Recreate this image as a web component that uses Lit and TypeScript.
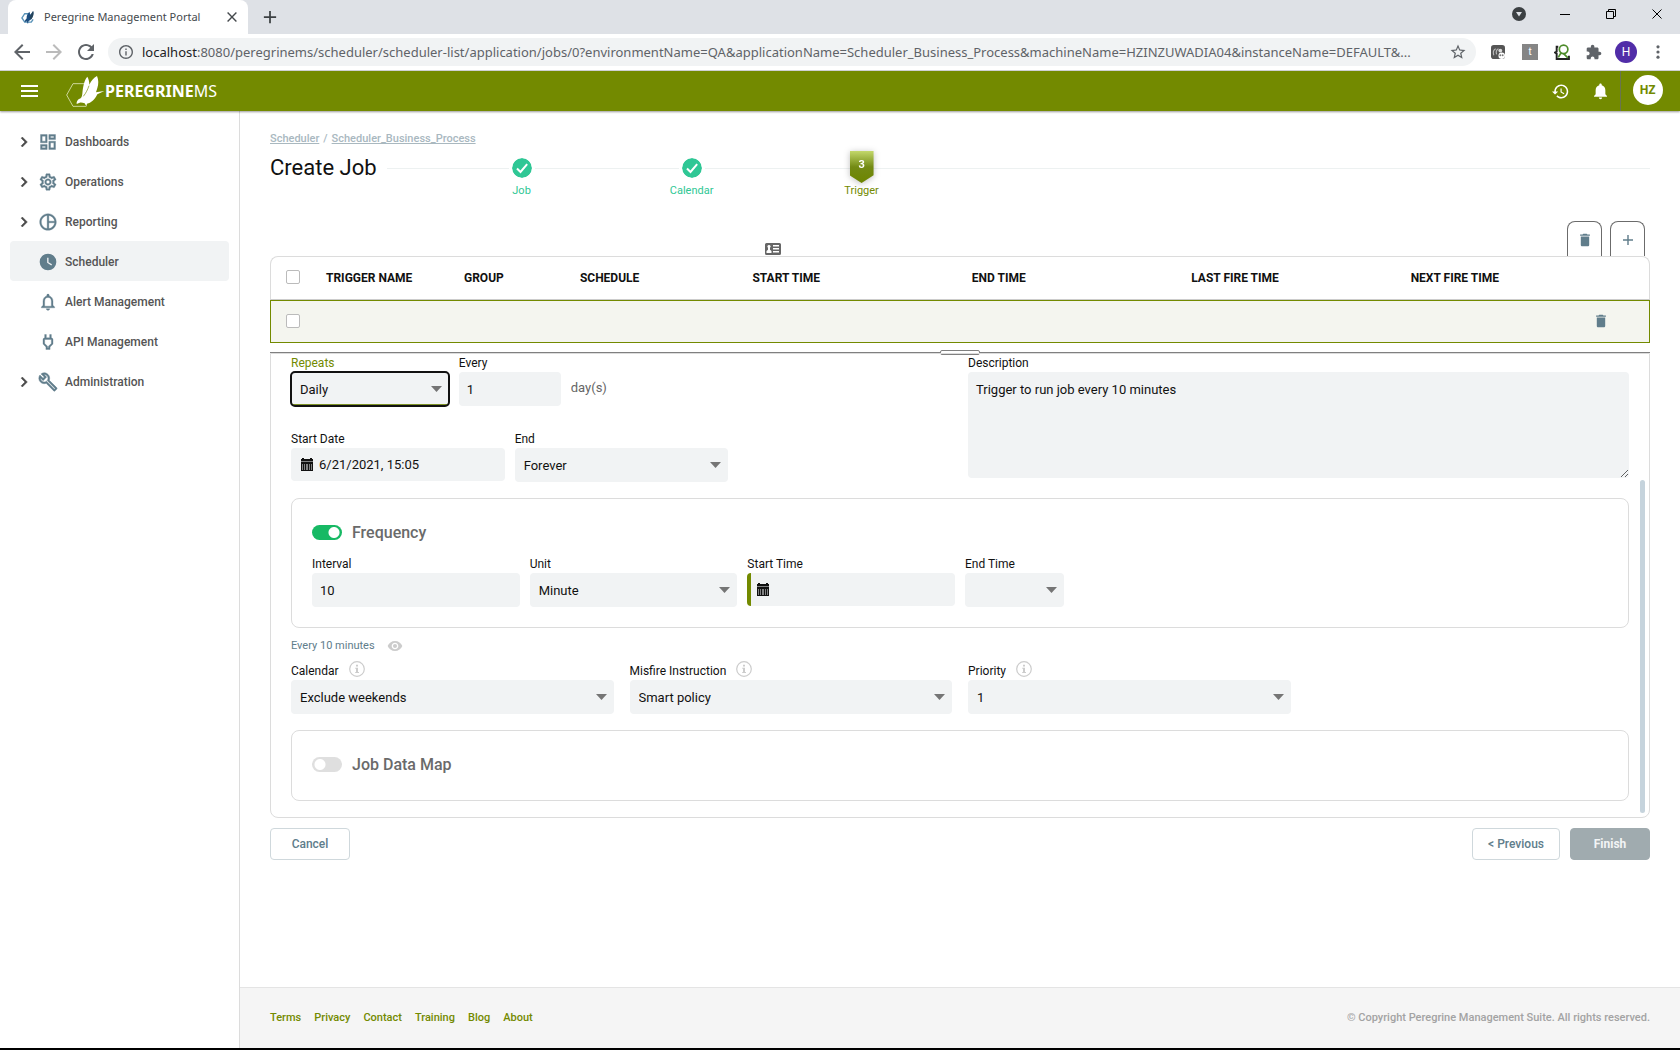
import { LitElement, html, css, svg, nothing, TemplateResult } from "lit";
import { customElement, state } from "lit/decorators.js";
import { classMap } from "lit/directives/class-map.js";

const icon = (box: string, body: TemplateResult, cls = "icon") =>
  html`<svg class=${cls} viewBox=${box} fill="currentColor" aria-hidden="true">${body}</svg>`;

const shapes = {
  dashboards: svg`<path d="M19 5v2h-4V5h4M9 5v6H5V5h4m10 8v6h-4v-6h4M9 17v2H5v-2h4M21 3h-8v6h8V3zM11 3H3v10h8V3zm10 8h-8v10h8V11zm-10 4H3v6h8v-6z" stroke="currentColor" stroke-width=".4"/>`,
  operations: svg`<path d="M19.43 12.98c.04-.32.07-.64.07-.98 0-.34-.03-.66-.07-.98l2.11-1.65c.19-.15.24-.42.12-.64l-2-3.46c-.09-.16-.26-.25-.44-.25-.06 0-.12.01-.17.03l-2.49 1c-.52-.4-1.08-.73-1.69-.98l-.38-2.65C14.46 2.18 14.25 2 14 2h-4c-.25 0-.46.18-.49.42l-.38 2.65c-.61.25-1.17.59-1.69.98l-2.49-1c-.06-.02-.12-.03-.18-.03-.17 0-.34.09-.43.25l-2 3.46c-.13.22-.07.49.12.64l2.11 1.65c-.04.32-.07.65-.07.98 0 .33.03.66.07.98l-2.11 1.65c-.19.15-.24.42-.12.64l2 3.46c.09.16.26.25.44.25.06 0 .12-.01.17-.03l2.49-1c.52.4 1.08.73 1.69.98l.38 2.65c.03.24.24.42.49.42h4c.25 0 .46-.18.49-.42l.38-2.65c.61-.25 1.17-.59 1.69-.98l2.49 1c.06.02.12.03.18.03.17 0 .34-.09.43-.25l2-3.46c.12-.22.07-.49-.12-.64l-2.11-1.65zm-1.98-1.71c.04.31.05.52.05.73 0 .21-.02.43-.05.73l-.14 1.13.89.7 1.08.84-.7 1.21-1.27-.51-1.04-.42-.9.68c-.43.32-.84.56-1.25.73l-1.06.43-.16 1.13-.2 1.35h-1.4l-.19-1.35-.16-1.13-1.06-.43c-.43-.18-.83-.41-1.23-.71l-.91-.7-1.06.43-1.27.51-.7-1.21 1.08-.84.89-.7-.14-1.13c-.03-.31-.05-.54-.05-.74s.02-.43.05-.73l.14-1.13-.89-.7-1.08-.84.7-1.21 1.27.51 1.04.42.9-.68c.43-.32.84-.56 1.25-.73l1.06-.43.16-1.13.2-1.35h1.39l.19 1.35.16 1.13 1.06.43c.43.18.83.41 1.23.71l.91.7 1.06-.43 1.27-.51.7 1.21-1.07.85-.89.7.14 1.13zM12 8c-2.21 0-4 1.79-4 4s1.79 4 4 4 4-1.79 4-4-1.79-4-4-4zm0 6c-1.1 0-2-.9-2-2s.9-2 2-2 2 .9 2 2-.9 2-2 2z" stroke="currentColor" stroke-width=".4"/>`,
  reporting: svg`<path d="M12 2C6.48 2 2 6.48 2 12s4.48 10 10 10 10-4.48 10-10S17.52 2 12 2zm1 2.07c3.61.45 6.48 3.33 6.93 6.93H13V4.07zM4 12c0-4.06 3.07-7.44 7-7.93v15.87c-3.93-.5-7-3.88-7-7.94zm9 7.93V13h6.93c-.45 3.61-3.32 6.48-6.93 6.93z" stroke="currentColor" stroke-width=".4"/>`,
  scheduler: svg`<path fill-rule="evenodd" d="M12 2a10 10 0 1 0 0 20 10 10 0 0 0 0-20zm-1 5h1.6v5.2l4.2 2.6-.8 1.3-5-3.1V7z"/>`,
  bellOutline: svg`<path d="M12 22c1.1 0 2-.9 2-2h-4c0 1.1.9 2 2 2zm6-6v-5c0-3.07-1.63-5.64-4.5-6.32V4c0-.83-.67-1.5-1.5-1.5s-1.5.67-1.5 1.5v.68C7.64 5.36 6 7.92 6 11v5l-2 2v1h16v-1l-2-2zm-2 1H8v-6c0-2.48 1.51-4.5 4-4.5s4 2.02 4 4.5v6z" stroke="currentColor" stroke-width=".4"/>`,
  plug: svg`<path d="M16.01 7V3h-2v4h-4V3H8v4h-.01C7 6.99 6 7.99 6 8.99v5.49L9.5 18v3h5v-3l3.5-3.51v-5.5c0-1-1-2-1.99-1.99zM16 13.66l-3.5 3.51V19h-1v-1.83L8 13.65V9h8v4.66z" stroke="currentColor" stroke-width=".4"/>`,
  wrench: svg`<path d="M22.61 18.99l-9.08-9.08c.93-2.34.45-5.1-1.44-7C9.79.61 6.21.4 3.66 2.26L7.5 6.11 6.08 7.52 2.25 3.69C.39 6.23.6 9.82 2.9 12.11c1.86 1.86 4.57 2.35 6.89 1.48l9.11 9.11c.39.39 1.02.39 1.41 0l2.3-2.3c.4-.38.4-1.01 0-1.41zm-3 1.6l-9.46-9.46c-.61.45-1.29.72-2 .82-1.36.2-2.79-.21-3.83-1.25C3.37 9.76 2.93 8.5 3 7.26l3.09 3.09 4.24-4.24-3.09-3.09c1.24-.07 2.49.37 3.44 1.31 1.08 1.08 1.49 2.57 1.24 3.96-.12.71-.42 1.37-.88 1.96l9.45 9.45-.88.89z" stroke="currentColor" stroke-width=".6"/>`,
  chevron: svg`<path d="M8.59 16.59L13.17 12 8.59 7.41 10 6l6 6-6 6z" stroke="currentColor" stroke-width=".6"/>`,
  history: svg`<path d="M13 3c-4.97 0-9 4.03-9 9H1l3.89 3.89.07.14L9 12H6c0-3.87 3.13-7 7-7s7 3.13 7 7-3.13 7-7 7c-1.93 0-3.68-.79-4.94-2.06l-1.42 1.42C8.27 19.99 10.51 21 13 21c4.97 0 9-4.03 9-9s-4.03-9-9-9zm-1 5v5l4.28 2.54.72-1.21-3.5-2.08V8H12z"/>`,
  bell: svg`<path d="M12 22c1.1 0 2-.9 2-2h-4c0 1.1.89 2 2 2zm6-6v-5c0-3.07-1.64-5.64-4.5-6.32V4c0-.83-.67-1.5-1.5-1.5s-1.5.67-1.5 1.5v.68C7.63 5.36 6 7.92 6 11v5l-2 2v1h16v-1l-2-2z"/>`,
  trash: svg`<path d="M6 19c0 1.1.9 2 2 2h8c1.1 0 2-.9 2-2V7H6v12zM19 4h-3.5l-1-1h-5l-1 1H5v2h14V4z"/>`,
  plus: svg`<path d="M19 13h-6v6h-2v-6H5v-2h6V5h2v6h6v2z"/>`,
  check: svg`<circle cx="12" cy="12" r="12"/><path d="M6 12.6l4.2 4.2L18.2 7.4" fill="none" stroke="#fff" stroke-width="2.4"/>`,
  eye: svg`<path fill-rule="evenodd" d="M12 4.500C7 4.500 2.730 7.610 1 12c1.730 4.390 6 7.500 11 7.500s9.270-3.110 11-7.500c-1.730-4.390-6-7.500-11-7.500zM12 17c-2.760 0-5-2.240-5-5s2.240-5 5-5 5 2.240 5 5-2.240 5-5 5zm0-8c-1.660 0-3 1.340-3 3s1.340 3 3 3 3-1.340 3-3-1.340-3-3-3z"/>`,
  info: svg`<circle cx="8" cy="8" r="7.300" fill="none" stroke="currentColor" stroke-width="1.200"/><path d="M7 3.800h2v1.700H7zM6.200 6.800H9v4.300h1V12H6.200v-.9H7V7.700h-.8z"/>`,
  calendar: svg`<path d="M0 1h1V0h2v1h6V0h2v1h1v2.500H0z"/><path fill-rule="evenodd" d="M0 4h12v9H0zM1 6.500v1h1v-1zm2 0v1h1v-1zm2 0v1h2v-1zm3 0v1h1v-1zm2 0v1h1v-1zM1 8.500v1h1v-1zm2 0v1h1v-1zm2 0v1h2v-1zm3 0v1h1v-1zm2 0v1h1v-1zM1 10.500v1h1v-1zm2 0v1h1v-1zm2 0v1h2v-1zm3 0v1h1v-1zm2 0v1h1v-1z"/>`,
  contact: svg`<path fill-rule="evenodd" d="M1.500 0h13A1.500 1.500 0 0 1 16 1.500v9a1.500 1.500 0 0 1-1.500 1.500h-13A1.500 1.500 0 0 1 0 10.500v-9A1.500 1.500 0 0 1 1.500 0zM4 2a1.500 1.500 0 0 0-1 2.700v2L1.500 8v2h5V8L5 6.700v-2A1.500 1.500 0 0 0 4 2zm4 0v1.500h6V2zm0 3v1.500h6V5zm0 3v1.500h6V8z"/>`,
  back: svg`<path d="M20 11H7.830l5.590-5.590L12 4l-8 8 8 8 1.410-1.410L7.830 13H20v-2z"/>`,
  forward: svg`<path d="M12 4l-1.410 1.410L16.170 11H4v2h12.170l-5.580 5.590L12 20l8-8z"/>`,
  reload: svg`<path d="M17.650 6.350C16.200 4.900 14.210 4 12 4c-4.420 0-7.990 3.580-7.990 8s3.570 8 7.990 8c3.730 0 6.840-2.550 7.730-6h-2.080c-.82 2.330-3.040 4-5.650 4-3.310 0-6-2.690-6-6s2.690-6 6-6c1.660 0 3.140.69 4.220 1.780L13 11h7V4l-2.350 2.350z"/>`,
  siteInfo: svg`<path d="M11 7h2v2h-2zm0 4h2v6h-2zm1-9C6.480 2 2 6.480 2 12s4.480 10 10 10 10-4.480 10-10S17.520 2 12 2zm0 18c-4.410 0-8-3.590-8-8s3.590-8 8-8 8 3.590 8 8-3.590 8-8 8z"/>`,
  star: svg`<path d="M22 9.240l-7.190-.62L12 2 9.190 8.630 2 9.240l5.460 4.730L5.820 21 12 17.270 18.180 21l-1.630-7.030L22 9.240zM12 15.400l-3.760 2.270 1-4.280-3.320-2.880 4.380-.38L12 6.100l1.710 4.040 4.380.38-3.320 2.880 1 4.280L12 15.400z"/>`,
  puzzle: svg`<path d="M20.500 11H19V7c0-1.100-.9-2-2-2h-4V3.500C13 2.120 11.880 1 10.500 1S8 2.120 8 3.500V5H4c-1.100 0-1.990.9-1.990 2v3.800H3.500c1.490 0 2.700 1.210 2.700 2.700s-1.210 2.700-2.700 2.700H2V20c0 1.100.9 2 2 2h3.800v-1.500c0-1.490 1.210-2.700 2.700-2.700s2.700 1.210 2.700 2.700V22H17c1.100 0 2-.9 2-2v-4h1.500c1.380 0 2.500-1.120 2.500-2.500S21.880 11 20.500 11z"/>`,
  dots: svg`<circle cx="12" cy="5.500" r="2"/><circle cx="12" cy="12" r="2"/><circle cx="12" cy="18.500" r="2"/>`,
  close: svg`<path d="M19 6.410L17.590 5 12 10.590 6.410 5 5 6.410 10.590 12 5 17.590 6.410 19 12 13.410 17.590 19 19 17.590 13.410 12z"/>`,
  menu: svg`<path d="M0 0h17v2H0zM0 5h17v2H0zM0 10h17v2H0z"/>`,
  circleDown: svg`<circle cx="7" cy="7" r="7"/><path d="M4 5h6l-3 4.500z" fill="#dee1e6"/>`,
  minimize: svg`<path d="M0 5h10v1H0z"/>`,
  restore: svg`<path d="M.5 2.500h7v7h-7zM2.500 2.500v-2h7v7h-2" fill="none" stroke="currentColor"/>`,
  windowClose: svg`<path d="M.5.5l9 9M9.500.5l-9 9" fill="none" stroke="currentColor"/>`,
  extFox: svg`<rect width="15" height="15" rx="3" fill="#555"/><path d="M3 11C2 8 3 5 5 4M6 10c-1-3 0-5 2-6" fill="none" stroke="#bbb" stroke-width="1.200"/><circle cx="10" cy="6" r="2" fill="#ddd"/><circle cx="11.500" cy="11.500" r="3.500" fill="#fff"/><circle cx="10" cy="11" r="1" fill="#777"/><circle cx="12.500" cy="11" r="1" fill="#777"/>`,
  extSearch: svg`<path d="M4 2.500H2.500V7L1 8l1.500 1v5H14v-3" fill="none" stroke="#222" stroke-width="1.800"/><circle cx="9" cy="5" r="4" fill="#fff" stroke="#4d8b2a" stroke-width="1.600"/><path d="M6.500 8.500L4 12.500M9 9l4 4" fill="none" stroke="#4d8b2a" stroke-width="1.600"/>`,
  bird: svg`<path d="M258 246H218L199 280l19 34h40" fill="none" stroke="#dfe6b8" stroke-width="2.500"/><path d="M246 276c2-20 5-40 15-51 4 7 6 15 6 24 6-12 13-21 23-26 5 12 5 24 1 36l-4 13 25-4-21 10c-8 17-19 26-31 28l-2 8-5-9c-6-2-11-4-15-2l-9 4c-1-7 3-12 7-15 6-2 9-6 10-16z" fill="#fff"/><path d="M266 252c-4 12-9 22-17 32" fill="none" stroke="#738a00" stroke-width="2"/>`,
  favicon: svg`<path d="M8 4H4L1 8.500 4 13h7l2-3" fill="none" stroke="#5a93b8" stroke-width="1.500"/><path d="M6 9c0-3 1-5 3-7l1 3 3-4c1 3 0 6-2 9l-3 2-.5 3-1.500-3-2 1c0-2 1-3 2-4z" fill="#1d4e80"/><path d="M9 8l4-7c1 3 0 6-2 9z" fill="#27455a"/>`,
};

interface NavItem {
  label: string;
  shape: TemplateResult;
  expandable: boolean;
}

const navItems: NavItem[] = [
  { label: "Dashboards", shape: shapes.dashboards, expandable: true },
  { label: "Operations", shape: shapes.operations, expandable: true },
  { label: "Reporting", shape: shapes.reporting, expandable: true },
  { label: "Scheduler", shape: shapes.scheduler, expandable: false },
  { label: "Alert Management", shape: shapes.bellOutline, expandable: false },
  { label: "API Management", shape: shapes.plug, expandable: false },
  { label: "Administration", shape: shapes.wrench, expandable: true },
];

const columns = ["Trigger Name", "Group", "Schedule", "Start Time", "End Time", "Last Fire Time", "Next Fire Time"];
const footerLinks = ["Terms", "Privacy", "Contact", "Training", "Blog", "About"];
const urlRest =
  ":8080/peregrinems/scheduler/scheduler-list/application/jobs/0?environmentName=QA&applicationName=Scheduler_Business_Process&machineName=HZINZUWADIA04&instanceName=DEFAULT&...";

@customElement("app-root")
export class AppRoot extends LitElement {
  @state() private activeNav = "Scheduler";
  @state() private frequency = true;
  @state() private dataMap = false;

  static styles = css`
    :host {
      display: flex;
      flex-direction: column;
      min-height: 100vh;
      box-sizing: border-box;
      border-bottom: 2px solid #000;
      background: #fff;
      color: #111;
      font: 400 13px/18px Roboto, "Liberation Sans", sans-serif;
    }
    *, *::before { box-sizing: border-box; }
    button, input, select, textarea { font: inherit; color: inherit; margin: 0; border-radius: 0; }
    button { border: 0; padding: 0; background: none; display: inline-flex; align-items: center; justify-content: center; cursor: pointer; }
    a { color: inherit; text-decoration: none; }
    svg { display: block; flex: none; }
    .icon { width: 20px; height: 20px; }

    .tabs { display: flex; height: 34px; background: #dee1e6; padding-left: 8px; font: 400 11px/18px "Noto Sans", "Open Sans", sans-serif; }
    .tab { display: flex; align-items: center; width: 240px; padding: 0 9px 0 13px; background: #fff; border-radius: 8px 8px 0 0; gap: 9px; color: #45494d; }
    .tab-title { flex: 1; white-space: nowrap; }
    .glyph16 { width: 16px; height: 16px; }
    .glyph14 { width: 14px; height: 14px; }
    .glyph10 { width: 10px; height: 10px; }
    .new-tab { width: 44px; color: #3c4043; }
    .window { margin-left: auto; display: flex; align-items: center; padding-bottom: 6px; color: #000; }
    .window button { width: 46px; }
    .window .glyph14 { color: #3c4043; }

    .toolbar { display: flex; align-items: center; height: 37px; padding: 0 6px 0 12px; gap: 6px; border-bottom: 1px solid #d4d6d9; color: #5f6368; }
    .nav-buttons { display: flex; gap: 12px; margin-right: 6px; }
    .nav-buttons .dim { color: #bbb; }
    .address { flex: 1; min-width: 0; display: flex; align-items: center; height: 28px; border-radius: 14px; background: #f1f3f4; padding: 0 9px 0 11px; gap: 9px; font: 400 13px/20px "Noto Sans", "Open Sans", sans-serif; }
    .glyph18 { width: 18px; height: 18px; }
    .url { flex: 1; min-width: 0; overflow: hidden; white-space: nowrap; }
    .host { color: #202124; }
    .extensions { display: flex; align-items: center; }
    .extensions button { width: 32px; }
    .ext-t { width: 16px; height: 16px; background: #858585; color: #fff; font: 400 11px/14px "Liberation Sans", sans-serif; text-align: center; }
    .profile { width: 22px; height: 22px; border-radius: 50%; background: #512da8; color: #fff; font-size: 12px; line-height: 22px; }

    .header { display: flex; align-items: center; height: 40px; background: #738a00; color: #fff; padding: 0 12px 0 21px; box-shadow: 0 1px 2px rgba(0, 0, 0, 0.4); position: relative; }
    .burger { width: 17px; height: 12px; }
    .brand { display: flex; align-items: center; margin-left: 28px; font: 400 16px/20px "Noto Sans", "Open Sans", sans-serif; }
    .brand strong { font-weight: 700; }
    .bird { width: 39px; height: 32px; }
    .header-actions { margin-left: auto; display: flex; align-items: stretch; height: 40px; }
    .header-actions button { width: 40px; }
    .header-actions .avatar-cell { width: 48px; border-left: 1px solid #6a7450; padding-left: 6px; }
    .avatar { display: grid; place-items: center; width: 30px; height: 30px; margin-bottom: 2px; border-radius: 50%; background: #fff; color: #738a00; font: 700 12px/18px "Open Sans", sans-serif; }
    .glyph17 { width: 17px; height: 17px; }

    .body { flex: 1; display: flex; }
    .sidebar { width: 240px; flex: none; border-right: 1px solid #dcdcdc; padding: 10px; }
    .nav-item { display: flex; align-items: center; height: 40px; padding: 1px 0 0 4px; border-radius: 4px; color: #555; font-size: 12px; font-weight: 500; }
    .nav-item.active { background: #f1f3f4; }
    .nav-item .icon { color: #607d8b; margin: 0 7px 0 4px; }
    .chevron-slot { width: 20px; }
    .nav-item .chevron { width: 20px; height: 20px; color: #4a4a4a; }

    .page { flex: 1; min-width: 0; display: flex; flex-direction: column; }
    .content { padding: 19px 30px; }
    .crumbs { display: flex; gap: 4px; font-size: 11px; font-weight: 500; line-height: 18px; color: #a9b8bf; }
    .crumbs a { text-decoration: underline; }
    .heading { display: flex; align-items: flex-start; gap: 10px; margin-top: 2px; }
    h1 { margin: 0; font-size: 22px; font-weight: 400; line-height: 36px; }
    .steps { flex: 1; display: flex; list-style: none; margin: 0; padding: 1px 0 0 50px; height: 48px; background: linear-gradient(#edf1f1, #edf1f1) 0 18px / 100% 1px no-repeat; }
    .step { width: 170px; display: flex; flex-direction: column; align-items: center; font-size: 11px; line-height: 14px; color: #2fc795; }
    .mark { display: grid; place-items: center; height: 36px; }
    .mark svg { width: 20px; height: 20px; border-radius: 50%; box-shadow: 0 0 0 3px #fff; }
    .step.current { color: #738a00; }
    .badge { display: block; width: 24px; height: 32px; margin-bottom: 1px; text-align: center; color: #fff; font-weight: 700; line-height: 27px; background: linear-gradient(#c3d86b, #738a14 50%, #6d8500); clip-path: polygon(0 0, 100% 0, 100% 76%, 50% 100%, 0 76%); }
    .badge-shadow { filter: drop-shadow(0 1px 3px rgba(0, 0, 0, 0.25)); }

    .table-tools { display: flex; align-items: flex-end; gap: 8px; margin-top: 23px; padding-right: 5px; height: 35px; }
    .table-tools button { width: 35px; height: 35px; padding-top: 2px; border: 1px solid #6b6b6b; border-bottom: 0; border-radius: 8px 8px 0 0; color: #607d8b; }
    .table-tools .contact { width: 16px; height: 12px; margin: 0 auto 1px 36%; color: #666; }
    .triggers { width: 100%; table-layout: fixed; border-collapse: separate; border-spacing: 0; }
    .triggers th { height: 44px; padding: 0; text-align: left; text-transform: uppercase; font-size: 12px; font-weight: 700; border-top: 1px solid #dcdcdc; border-bottom: 1px solid #ccc; }
    .triggers th:first-child { border-left: 1px solid #dcdcdc; border-top-left-radius: 8px; }
    .triggers th:last-child { border-right: 1px solid #dcdcdc; border-top-right-radius: 8px; }
    .triggers td { height: 43px; padding: 0; background: #f4f5ef; border-top: 1px solid #738a00; border-bottom: 1px solid #738a00; }
    .triggers td:first-child { border-left: 1px solid #738a00; }
    .triggers td:last-child { border-right: 1px solid #738a00; }
    .c-check { width: 56px; }
    .c-name { width: 10%; }
    .c-group { width: 8.4%; }
    .c-schedule { width: 12.5%; }
    .c-time { width: 15.9%; }
    .c-action { width: 60px; }
    .tick { appearance: none; display: block; width: 14px; height: 14px; margin: 0 0 2px 15px; border: 1px solid #bbb; border-radius: 2px; background: #fff; }
    .triggers td button { display: flex; margin: 0 0 2px 4px; color: #607d8b; }

    .splitter { position: relative; margin-top: 9px; border-top: 1px solid #808080; }
    .splitter::before { content: ""; position: absolute; top: -3px; left: 50%; width: 40px; height: 5px; margin-left: -20px; border: 1px solid #808080; border-radius: 2px; background: #fff; }
    .panel { position: relative; border: 1px solid #dcdcdc; border-radius: 0 0 8px 8px; padding: 0 20px 16px; }
    .thumb { position: absolute; right: 4px; bottom: 4px; width: 5px; height: 72%; border-radius: 3px; background: #c5d3dc; }

    .halves { display: grid; grid-template-columns: 1fr 1fr; gap: 16px; }
    .stack { display: flex; flex-direction: column; gap: 24px; }
    .row4, .row3, .row6 { display: grid; gap: 10px; }
    .row4 { grid-template-columns: repeat(4, 1fr); }
    .row3 { grid-template-columns: repeat(3, 1fr); }
    .row6 { grid-template-columns: repeat(6, 1fr); }
    .quarters { display: grid; grid-template-columns: repeat(4, 1fr); gap: 16px; }
    .field { min-width: 0; }
    .field > .label { display: flex; align-items: center; height: 18px; gap: 10px; font-size: 12px; }
    .field.on > .label { color: #738a00; }
    .with-unit { display: flex; gap: 10px; grid-column: span 2; }
    .with-unit .field { width: 102px; }
    .unit { align-self: flex-end; line-height: 18px; margin-bottom: 9px; color: #666; }
    .label .info { width: 16px; height: 16px; color: #ccc; margin-bottom: 4px; }
    .box, .select, .date { display: block; width: 100%; height: 34px; border: 0; border-radius: 4px; background: #f1f3f4; padding: 0 8px; outline: 0; }
    .select { appearance: none; grid-area: 1 / 1; padding: 2px 9px 0; }
    .select-wrap { display: grid; align-items: center; }
    .arrow { grid-area: 1 / 1; justify-self: end; width: 11px; height: 6px; margin-right: 7px; color: #757575; pointer-events: none; }
    .on .select { border-bottom: 2px solid #7d9126; padding-top: 4px; outline: 2px solid #111; outline-offset: -1px; }
    .date { display: flex; align-items: center; height: 33px; gap: 6px; padding-left: 10px; }
    .date.required { border-left: 4px solid #738a00; padding-left: 6px; }
    .date input { flex: 1; min-width: 0; border: 0; padding: 0; background: none; outline: 0; }
    .cal { width: 12px; height: 13px; color: #111; }
    .half-width { width: 99px; }
    textarea.box { height: 106px; padding: 9px 8px; resize: vertical; }

    .card { border: 1px solid #dcdcdc; border-radius: 8px; padding: 20px; margin-top: 16px; min-height: 71px; }
    .card-title { display: flex; align-items: center; gap: 10px; height: 28px; font-size: 16px; font-weight: 500; color: #6a6a6a; }
    .switch { appearance: none; width: 30px; height: 15px; margin-bottom: 1px; border-radius: 8px; background: radial-gradient(circle at 8px 50%, #fff 5px, transparent 6px) #dfdfdf; }
    .switch:checked { background: radial-gradient(circle at 22px 50%, #fff 5px, transparent 6px) #17b964; }
    .card .row6 { margin-top: 8px; }
    .summary { display: flex; align-items: center; gap: 12px; margin: 9px 0 7px; height: 18px; font-size: 11px; color: #607d8b; }
    .summary svg { width: 16px; height: 16px; color: #ccc; }

    .actions { display: flex; gap: 10px; margin-top: 10px; }
    .actions button { height: 32px; min-width: 80px; padding: 0 15px; border: 1px solid #cfd8dc; border-radius: 4px; background: #fff; color: #607d8b; font-size: 12px; font-weight: 500; }
    .actions .cancel { margin-right: auto; }
    .actions .finish { background: #a0abaf; border-color: #a0abaf; color: #f2f4f5; font-weight: 700; }

    .footer { margin-top: auto; display: flex; justify-content: space-between; align-items: center; height: 61px; padding: 0 30px; background: #f5f5f5; border-top: 1px solid #e4e4e4; font-size: 11px; font-weight: 500; color: #a3a3a3; }
    .footer nav { display: flex; gap: 13px; color: #738a00; }
  `;

  private field(id: string, label: string, control: TemplateResult, info = false, on = false) {
    return html`<div class=${classMap({ field: true, on })}>
      <div class="label"><label for=${id}>${label}</label>${info ? icon("0 0 16 16", shapes.info, "info") : nothing}</div>
      ${control}
    </div>`;
  }

  private select(id: string, value: string) {
    return html`<div class="select-wrap">
      <select class="select" id=${id}><option>${value}</option></select>
      <svg class="arrow" viewBox="0 0 11 6" fill="currentColor" aria-hidden="true"><path d="M0 0h11L5.500 6z"/></svg>
    </div>`;
  }

  private date(id: string, value: string, required = false) {
    return html`<div class=${classMap({ date: true, required })}>
      ${icon("0 0 12 13", shapes.calendar, "cal")}<input id=${id} type="text" .value=${value} />
    </div>`;
  }

  private browserBar() {
    return html`
      <div class="tabs">
        <div class="tab">
          ${icon("0 0 15 15", shapes.favicon, "glyph14")}
          <span class="tab-title">Peregrine Management Portal</span>
          <button aria-label="Close tab">${icon("2 2 20 20", shapes.close, "glyph14")}</button>
        </div>
        <button class="new-tab" aria-label="New tab">${icon("4 4 16 16", shapes.plus, "glyph14")}</button>
        <div class="window">
          <button aria-label="Search tabs">${icon("0 0 14 14", shapes.circleDown, "glyph14")}</button>
          <button aria-label="Minimize">${icon("0 0 10 10", shapes.minimize, "glyph10")}</button>
          <button aria-label="Restore">${icon("0 0 10 10", shapes.restore, "glyph10")}</button>
          <button aria-label="Close window">${icon("0 0 10 10", shapes.windowClose, "glyph10")}</button>
        </div>
      </div>
      <div class="toolbar">
        <div class="nav-buttons">
          <button aria-label="Back">${icon("2 2 20 20", shapes.back)}</button>
          <button class="dim" aria-label="Forward">${icon("2 2 20 20", shapes.forward)}</button>
          <button aria-label="Reload">${icon("2 2 20 20", shapes.reload)}</button>
        </div>
        <div class="address">
          ${icon("2 2 20 20", shapes.siteInfo, "glyph14")}
          <div class="url"><span class="host">localhost</span>${urlRest}</div>
          <button aria-label="Bookmark">${icon("0 0 24 24", shapes.star, "glyph18")}</button>
        </div>
        <div class="extensions">
          <button aria-label="Extension">${icon("0 0 15 15", shapes.extFox, "glyph14")}</button>
          <button><span class="ext-t">t</span></button>
          <button aria-label="Search extension">${icon("0 0 15 15", shapes.extSearch, "glyph16")}</button>
          <button aria-label="Extensions">${icon("1 0 23 23", shapes.puzzle, "glyph16")}</button>
          <button><span class="profile">H</span></button>
          <button aria-label="More">${icon("2 2 20 20", shapes.dots, "glyph16")}</button>
        </div>
      </div>
    `;
  }

  private form() {
    return html`
      <div class="splitter"></div>
      <form class="panel" @submit=${(e: Event) => e.preventDefault()}>
        <div class="halves">
          <div class="stack">
            <div class="row4">
              ${this.field("repeats", "Repeats", this.select("repeats", "Daily"), false, true)}
              <div class="with-unit">
                ${this.field("every", "Every", html`<input class="box" id="every" .value=${"1"} />`)}
                <span class="unit">day(s)</span>
              </div>
            </div>
            <div class="row3">
              ${this.field("start-date", "Start Date", this.date("start-date", "6/21/2021, 15:05"))}
              ${this.field("end", "End", this.select("end", "Forever"))}
            </div>
          </div>
          ${this.field("description", "Description", html`<textarea class="box" id="description" .value=${"Trigger to run job every 10 minutes"}></textarea>`)}
        </div>
        <section class="card">
          <div class="card-title">
            <input class="switch" id="frequency" type="checkbox" role="switch" .checked=${this.frequency}
              @change=${(e: Event) => (this.frequency = (e.target as HTMLInputElement).checked)} />
            <label for="frequency">Frequency</label>
          </div>
          ${this.frequency
            ? html`<div class="row6">
                ${this.field("interval", "Interval", html`<input class="box" id="interval" .value=${"10"} />`)}
                ${this.field("unit", "Unit", this.select("unit", "Minute"))}
                ${this.field("start-time", "Start Time", this.date("start-time", "", true))}
                <div class="half-width">${this.field("end-time", "End Time", this.select("end-time", ""))}</div>
              </div>`
            : nothing}
        </section>
        <div class="summary"><span>Every 10 minutes</span>${icon("0 0 24 24", shapes.eye)}</div>
        <div class="quarters">
          ${this.field("calendar", "Calendar", this.select("calendar", "Exclude weekends"), true)}
          ${this.field("misfire", "Misfire Instruction", this.select("misfire", "Smart policy"), true)}
          ${this.field("priority", "Priority", this.select("priority", "1"), true)}
        </div>
        <section class="card">
          <div class="card-title">
            <input class="switch" id="data-map" type="checkbox" role="switch" .checked=${this.dataMap}
              @change=${(e: Event) => (this.dataMap = (e.target as HTMLInputElement).checked)} />
            <label for="data-map">Job Data Map</label>
          </div>
        </section>
        <div class="thumb"></div>
      </form>
    `;
  }

  render() {
    return html`
      ${this.browserBar()}
      <header class="header">
        <button aria-label="Menu">${icon("0 0 17 12", shapes.menu, "burger")}</button>
        <a class="brand" href="#">${icon("197 220 117 96", shapes.bird, "bird")}<span><strong>PEREGRINE</strong>MS</span></a>
        <div class="header-actions">
          <button aria-label="History">${icon("1 2 22 20", shapes.history, "glyph17")}</button>
          <button aria-label="Notifications">${icon("2 2 20 21", shapes.bell, "glyph17")}</button>
          <button class="avatar-cell"><span class="avatar">HZ</span></button>
        </div>
      </header>
      <div class="body">
        <nav class="sidebar">
          ${navItems.map(
            (n) => html`<a class=${classMap({ "nav-item": true, active: n.label === this.activeNav })} href="#"
              @click=${() => (this.activeNav = n.label)}>
              <span class="chevron-slot">${n.expandable ? icon("0 0 24 24", shapes.chevron, "chevron") : nothing}</span>
              ${icon("0 0 24 24", n.shape)}<span>${n.label}</span>
            </a>`
          )}
        </nav>
        <div class="page">
          <main class="content">
            <div class="crumbs"><a href="#">Scheduler</a><span>/</span><a href="#">Scheduler_Business_Process</a></div>
            <div class="heading">
              <h1>Create Job</h1>
              <ol class="steps">
                <li class="step"><span class="mark">${icon("0 0 24 24", shapes.check)}</span>Job</li>
                <li class="step"><span class="mark">${icon("0 0 24 24", shapes.check)}</span>Calendar</li>
                <li class="step current"><span class="badge-shadow"><span class="badge">3</span></span>Trigger</li>
              </ol>
            </div>
            <div class="table-tools">
              ${icon("0 0 16 12", shapes.contact, "contact")}
              <button aria-label="Delete selected">${icon("2 2 20 20", shapes.trash, "glyph14")}</button>
              <button aria-label="Add trigger">${icon("5 5 14 14", shapes.plus, "glyph10")}</button>
            </div>
            <table class="triggers">
              <colgroup>
                <col class="c-check" /><col class="c-name" /><col class="c-group" /><col class="c-schedule" />
                <col class="c-time" /><col class="c-time" /><col class="c-time" /><col /><col class="c-action" />
              </colgroup>
              <thead>
                <tr>
                  <th><input class="tick" type="checkbox" aria-label="Select all triggers" /></th>
                  ${columns.map((c) => html`<th>${c}</th>`)}
                  <th></th>
                </tr>
              </thead>
              <tbody>
                <tr>
                  <td><input class="tick" type="checkbox" aria-label="Select trigger" /></td>
                  ${columns.map(() => html`<td></td>`)}
                  <td><button aria-label="Delete trigger">${icon("2 2 20 20", shapes.trash, "glyph14")}</button></td>
                </tr>
              </tbody>
            </table>
            ${this.form()}
            <div class="actions">
              <button class="cancel">Cancel</button>
              <button>&lt; Previous</button>
              <button class="finish">Finish</button>
            </div>
          </main>
          <footer class="footer">
            <nav>${footerLinks.map((l) => html`<a href="#">${l}</a>`)}</nav>
            <span>© Copyright Peregrine Management Suite. All rights reserved.</span>
          </footer>
        </div>
      </div>
    `;
  }
}
